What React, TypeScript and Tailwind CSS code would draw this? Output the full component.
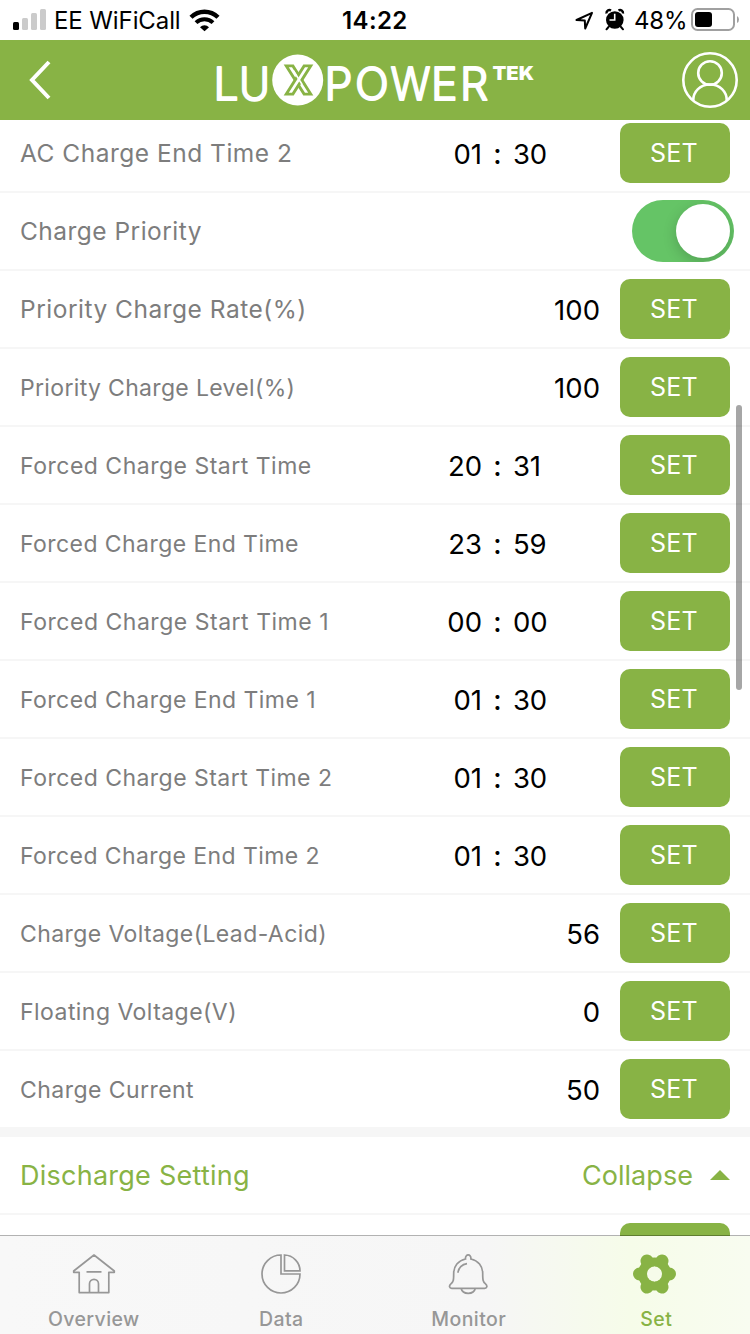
import type { ReactNode } from "react";

interface Setting {
  label: string;
  labelClass: string;
  value?: string;
  time?: [string, string];
  toggle?: boolean;
}

const chargeSettings: Setting[] = [
  { label: "AC Charge End Time 2", labelClass: "pt-px text-[24.5px] tracking-[0.5px]", time: ["01", "30"] },
  { label: "Charge Priority", labelClass: "pt-px text-[24.5px] tracking-[0.47px]", toggle: true },
  { label: "Priority Charge Rate(%)", labelClass: "pt-px text-[24.5px] tracking-[0.5px]", value: "100" },
  { label: "Priority Charge Level(%)", labelClass: "pt-[3px] text-[23px] tracking-[0.33px]", value: "100" },
  { label: "Forced Charge Start Time", labelClass: "pt-[3px] text-[23px] tracking-[0.5px]", time: ["20", "31"] },
  { label: "Forced Charge End Time", labelClass: "pt-[3px] text-[23px] tracking-[0.43px]", time: ["23", "59"] },
  { label: "Forced Charge Start Time 1", labelClass: "pt-[3px] text-[23px] tracking-[0.52px]", time: ["00", "00"] },
  { label: "Forced Charge End Time 1", labelClass: "pt-[3px] text-[23px] tracking-[0.45px]", time: ["01", "30"] },
  { label: "Forced Charge Start Time 2", labelClass: "pt-[3px] text-[23px] tracking-[0.47px]", time: ["01", "30"] },
  { label: "Forced Charge End Time 2", labelClass: "pt-[3px] text-[23px] tracking-[0.42px]", time: ["01", "30"] },
  { label: "Charge Voltage(Lead-Acid)", labelClass: "pt-[3px] text-[23px] tracking-[0.4px]", value: "56" },
  { label: "Floating Voltage(V)", labelClass: "pt-[3px] text-[23px] tracking-[0.45px]", value: "0" },
  { label: "Charge Current", labelClass: "pt-[3px] text-[23px] tracking-[0.45px]", value: "50" },
];

function StatusBar() {
  return (
    <div className="flex h-10 shrink-0 items-center bg-white text-[24px] leading-10 text-black">
      <svg className="ml-3 h-10 w-[36px]" viewBox="12 0 36 40">
        <rect x="13" y="22" width="6" height="8" rx="1.5" fill="#000" />
        <rect x="22" y="18" width="6" height="12" rx="1.5" fill="#cbcbcb" />
        <rect x="31" y="13" width="6" height="17" rx="1.5" fill="#cbcbcb" />
        <rect x="40" y="9" width="6" height="21" rx="1.5" fill="#cbcbcb" />
      </svg>
      <span className="ml-[6px] w-[133px] whitespace-nowrap pt-[2px] tracking-[-0.1px]">EE WiFiCall</span>
      <svg className="ml-px h-10 w-[32px]" viewBox="188 0 32 40" fill="none" stroke="#000">
        <path d="M191 17.200a19.300 19.300 0 0 1 27 0" strokeWidth="4.400" />
        <path d="M196 22.600a12.200 12.200 0 0 1 17 0" strokeWidth="4" />
        <path d="M200 27.200a6.400 6.400 0 0 1 9 0l-4.500 4z" fill="#000" stroke="none" />
      </svg>
      <span className="ml-[122px] w-[68px] whitespace-nowrap pt-[2px] font-semibold tracking-[0.4px]">14:22</span>
      <svg className="ml-[163px] h-10 w-[22px]" viewBox="573 0 22 40" fill="none" stroke="#000" strokeWidth="2" strokeLinejoin="round">
        <path d="M592 12.800 576.500 20l8.300.5.400 8z" />
      </svg>
      <svg className="ml-[9px] h-10 w-[22px]" viewBox="604 0 22 40">
        <circle cx="614.800" cy="20" r="8.800" />
        <path d="M608.500 27l-2 2.300M621 27l2 2.300" stroke="#000" strokeWidth="2" strokeLinecap="round" />
        <path d="M606.500 13.500a3 3 0 0 1 4.500-3M618.500 10.500a3 3 0 0 1 4.500 3" stroke="#000" strokeWidth="2.400" fill="none" />
        <path d="M614.700 13.800v6.200h-5.200" fill="none" stroke="#fff" strokeWidth="1.600" />
      </svg>
      <span className="ml-[8px] w-[54px] whitespace-nowrap pt-[2px] tracking-[-0.2px]">48%</span>
      <svg className="ml-[2px] h-10 w-[50px]" viewBox="690 0 50 40">
        <rect x="692" y="9" width="42" height="21" rx="5.500" fill="none" stroke="#a0a0a0" strokeWidth="2" />
        <rect x="695" y="12" width="17" height="15" rx="3" />
        <path d="M737 16q2 1 2 3.500t-2 3.500z" fill="#a0a0a0" />
      </svg>
    </div>
  );
}

function Logo() {
  return (
    <svg className="h-20 w-[330px]" viewBox="210 40 330 80" fontFamily="Inter, sans-serif">
      <g fill="#fff" stroke="#fff" strokeWidth="1.900" strokeLinejoin="round" fontSize="44.500" fontWeight="300">
        <text x="213.500" y="100.200">L</text>
        <text x="239" y="100.200" textLength="31" lengthAdjust="spacingAndGlyphs">U</text>
        <text x="324.500 355" y="100.200">PO</text>
        <text x="390.500" y="100.200" textLength="40" lengthAdjust="spacingAndGlyphs">W</text>
        <text x="431 460" y="100.200">ER</text>
      </g>
      <circle cx="297.700" cy="80" r="25.500" fill="#fff" />
      <g fill="#fff" stroke="#88b345" strokeWidth="2.900">
        <path d="M286.300 65.900h6.600l17.800 28.200h-6.600z" />
        <path d="M304.100 65.900h6.600l-17.800 28.200h-6.600z" />
      </g>
      <path d="M293.300 70.500l8.500 13.500" fill="none" stroke="#fff" strokeWidth="1.600" />
      <text x="492.500" y="80.300" fill="#fff" fontSize="18.500" fontWeight="900" textLength="41.500" lengthAdjust="spacingAndGlyphs">
        TEK
      </text>
    </svg>
  );
}

function Header() {
  return (
    <header className="flex h-20 shrink-0 items-center bg-[#88b345]">
      <svg className="ml-5 h-20 w-10" viewBox="20 40 40 80" fill="none" stroke="#fff" strokeWidth="4">
        <path d="M49 62 32 80l17 18" strokeLinejoin="miter" />
      </svg>
      <div className="ml-[150px]">
        <Logo />
      </div>
      <svg className="ml-[140px] h-20 w-[60px]" viewBox="680 40 60 80" fill="none" stroke="#fff" strokeWidth="2.600">
        <circle cx="710" cy="80" r="26.700" />
        <circle cx="710" cy="73" r="11.800" />
        <path d="M693.200 100.500c0-9 7-16 16.800-16s16.800 7 16.800 16" />
      </svg>
    </header>
  );
}

function SetButton({ label = "SET" }: { label?: string }) {
  return (
    <button className="h-[60px] w-[110px] shrink-0 rounded-[10px] bg-[#88b345] pr-[2px] pt-[2px] text-[25px] tracking-[0.3px] text-white">
      {label}
    </button>
  );
}

function Toggle() {
  return (
    <div className="-mr-1 flex h-[62px] w-[102px] shrink-0 items-center justify-end overflow-hidden rounded-full bg-[#65c466] pr-1">
      <div className="size-[54px] rounded-full bg-white shadow-[0_4px_14px_rgba(0,0,0,0.18)]" />
    </div>
  );
}

function SettingRow({ setting }: { setting: Setting }) {
  const { label, labelClass, value, time, toggle } = setting;

  return (
    <div className="flex h-[78px] items-center border-b-2 border-[#f6f6f6] px-5 last:h-[76px] last:border-b-0">
      <span className={`flex-1 whitespace-nowrap text-[#7d7d7d] ${labelClass}`}>{label}</span>
      {time ? (
        <div className="mr-[53px] mt-1 flex items-center text-[27.5px] text-black">
          <span className="w-12 text-right">{time[0]}</span>
          <span className="w-[31px] text-center font-medium">:</span>
          <span className="w-[54px] tracking-[-0.2px]">{time[1]}</span>
        </div>
      ) : null}
      {value ? <span className="mr-5 mt-1 text-[27.5px] text-black">{value}</span> : null}
      {toggle ? <Toggle /> : <SetButton />}
    </div>
  );
}

interface TabProps {
  label: string;
  active?: boolean;
  children: ReactNode;
}

function Tab({ label, active, children }: TabProps) {
  return (
    <div className={`flex flex-1 flex-col items-center pt-[14px] ${active ? "text-[#88b345]" : "text-[#979797]"}`}>
      <svg className="h-12 w-12" viewBox="0 0 48 48" fill="none" stroke="currentColor" strokeWidth="1.700">
        {children}
      </svg>
      <span className="mt-[7px] text-[19.5px] font-medium leading-7 tracking-[0.4px]">{label}</span>
    </div>
  );
}

function TabBar() {
  return (
    <nav className="relative -mt-px flex h-[99px] shrink-0 border-t border-black/30 bg-[linear-gradient(90deg,#f8f8f8_0%,#f6f6f6_65%,#f6fce9_84%,#f8fcf0_100%)] bg-origin-border [background-clip:padding-box]">
      <Tab label="Overview">
        <path d="M24 5 3.700 21v1.300h5.500v20.300h29.600V22.300h5.500V21z" strokeLinejoin="round" />
        <path d="M16.500 21.800h15M19.500 42.300V33.800a4.500 4.500 0 0 1 9 0v8.500" />
      </Tab>
      <Tab label="Data">
        <path d="M24 5a19 19 0 1 0 19 19H24z" />
        <path d="M27.500 5v15.800h15.500a16 16 0 0 0-15.500-15.800z" />
      </Tab>
      <Tab label="Monitor">
        <g transform="translate(-0.800 0.300)">
          <path d="M21.300 8.700C20.800 3.300 27.200 3.300 26.700 8.700 34 10.200 38.500 16 38.500 23c0 7 .3 8.500 2.800 10.500 2.300 2 1.500 4.500-.8 4.500h-33c-2.300 0-3.100-2.500-.8-4.500C9.200 31.500 9.500 30 9.500 23c0-7 4.500-12.800 11.800-14.300z" />
          <path d="M17 38.200c.5 2.500 3 4.800 7 4.800s6.500-2.300 7-4.800M13.800 22.500c.3-4.800 4-8.600 9-9.200" />
        </g>
      </Tab>
      <Tab label="Set" active>
        <g transform="translate(-1 0)">
          <circle cx="23.500" cy="24" r="12" strokeWidth="9" />
          <path
            d="M35.500 24h3M11.500 24h-3M29.500 34.400l1.500 2.600M17.500 13.600 16 11M29.500 13.600 31 11M17.500 34.400 16 37"
            strokeWidth="13"
            strokeLinecap="round"
          />
          <circle cx="23.500" cy="24" r="7.500" fill="#f6fbea" stroke="none" />
        </g>
      </Tab>
    </nav>
  );
}

export default function App() {
  return (
    <div className="flex h-[1334px] w-[750px] flex-col overflow-hidden bg-white font-['Inter','Liberation_Sans',sans-serif]">
      <StatusBar />
      <Header />
      <main className="relative h-[1116px] shrink-0 overflow-hidden">
        <section className="-mt-[5px] border-b-[10px] border-[#f6f6f6]">
          {chargeSettings.map((setting) => (
            <SettingRow key={setting.label} setting={setting} />
          ))}
        </section>
        <section className="text-[#88b345]">
          <div className="flex h-[78px] items-center border-b-2 border-[#f6f6f6] px-5 text-[27px]">
            <h2 className="flex-1 pt-[2px] tracking-[0.25px]">Discharge Setting</h2>
            <span className="pt-[2px] tracking-[0.05px]">Collapse</span>
            <svg className="ml-[17px] h-[10px] w-5" viewBox="0 0 20 10" fill="currentColor">
              <path d="M0 10 10 0l10 10z" />
            </svg>
          </div>
          <div className="flex justify-end px-5 pt-2">
            <SetButton label="" />
          </div>
        </section>
        <div className="absolute right-2 top-[285px] h-[285px] w-[6px] rounded-full bg-black/35" />
      </main>
      <TabBar />
    </div>
  );
}
